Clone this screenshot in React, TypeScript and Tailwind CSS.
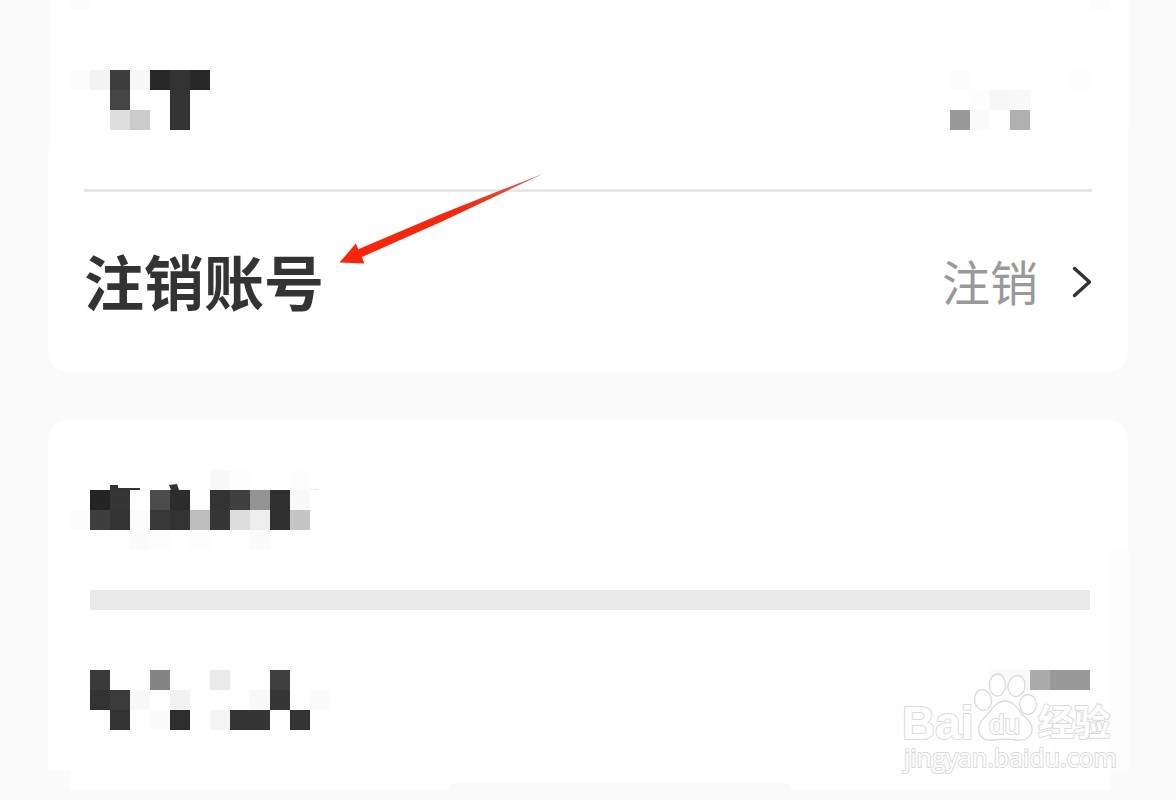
import React from "react";

type Cell = [col: number, row: number, fill: string, span?: number];

const CELL = 20;

function Mosaic({ cols, rows, cells, children }: { cols: number; rows: number; cells: Cell[]; children?: React.ReactNode }) {
  return (
    <svg width={cols * CELL} height={rows * CELL} aria-hidden="true" className="shrink-0">
      {cells.map(([c, r, fill, span = 1]) => (
        <rect key={`${c}-${r}`} x={c * CELL} y={r * CELL} width={span * CELL} height={CELL} fill={fill} />
      ))}
      {children}
    </svg>
  );
}

const nameCells: Cell[] = [
  [0, 0, "#fcfcfc"], [1, 0, "#f3f3f3"], [2, 0, "#3d3d3d"], [3, 0, "#f7f7f7"],
  [4, 0, "#292929"], [5, 0, "#333333"], [6, 0, "#292929"],
  [2, 1, "#454545"], [5, 1, "#333333"],
  [2, 2, "#dfdfdf"], [3, 2, "#cbcbcb"], [5, 2, "#333333"],
];

const nameValueCells: Cell[] = [
  [0, 0, "#fcfcfc"], [6, 0, "#fdfdfd"],
  [1, 1, "#fdfdfd"], [2, 1, "#f7f7f7"], [3, 1, "#f8f8f8"],
  [0, 2, "#999999"], [1, 2, "#fafafa"], [3, 2, "#b0b0b0"],
];

const titleCells: Cell[] = [
  [7, 0, "#f9f9f9"], [8, 0, "#fdfdfd"], [11, 0, "#fdfdfd"],
  [1, 1, "#242424"], [2, 1, "#353535"], [4, 1, "#4c4c4c"], [5, 1, "#2c2c2c"],
  [7, 1, "#333333"], [8, 1, "#404040"], [9, 1, "#939393"], [10, 1, "#303030"], [11, 1, "#f9f9f9"],
  [0, 2, "#fcfcfc"], [1, 2, "#3e3e3e"], [2, 2, "#333333"], [3, 2, "#fcfcfc"], [4, 2, "#393939"],
  [5, 2, "#333333"], [6, 2, "#bebebe"], [7, 2, "#363636"], [8, 2, "#dcdcdc"], [9, 2, "#eeeeee"],
  [10, 2, "#303030"], [11, 2, "#c5c5c5"],
  [3, 3, "#fbfbfb"], [4, 3, "#fdfdfd"], [6, 3, "#fdfdfd"], [9, 3, "#fbfbfb"],
];

const detailCells: Cell[] = [
  [0, 0, "#3a3a3a"], [3, 0, "#848484"], [6, 0, "#ebebeb"], [9, 0, "#3f3f3f"],
  [0, 1, "#333333"], [1, 1, "#3b3b3b"], [2, 1, "#f9f9f9"], [4, 1, "#f2f2f2"], [8, 1, "#f8f8f8"],
  [9, 1, "#363636"], [11, 1, "#fbfbfb"],
  [1, 2, "#333333"], [3, 2, "#fbfbfb"], [4, 2, "#2d2d2d"], [6, 2, "#f5f5f5"], [7, 2, "#353535", 2],
  [10, 2, "#333333"],
];

const detailValueCells: Cell[] = [[0, 0, "#f9f9f9", 2], [2, 0, "#ababab"], [3, 0, "#999999", 2]];

function Arrow() {
  return (
    <svg width="210" height="96" viewBox="336 170 210 96" aria-hidden="true" className="pointer-events-none absolute left-72 top-[170px]">
      <defs>
        <linearGradient id="arrow-fill" gradientUnits="userSpaceOnUse" x1="340" y1="263" x2="544" y2="173">
          <stop offset="0" stopColor="#fb2408" />
          <stop offset="0.6" stopColor="#ee2a10" />
          <stop offset="1" stopColor="#d06a60" />
        </linearGradient>
      </defs>
      <path d="M339.5 262.6 355.8 243.6 358.3 249.2 440 214.6 500 190.6 543.6 173.4 502 193.2 442 221.4 362 257 364.2 263.6Z" fill="url(#arrow-fill)" />
    </svg>
  );
}

function Watermark() {
  return (
    <svg width="216" height="106" viewBox="900 670 216 106" role="img" aria-label="Baidu" className="pointer-events-none absolute bottom-3.5 right-3">
      <g fill="#ffffff" stroke="#dadada" strokeWidth="1.3">
        <ellipse cx="983" cy="700" rx="8.5" ry="10.5" transform="rotate(-10 983 700)" />
        <ellipse cx="997.5" cy="685" rx="8" ry="11" />
        <ellipse cx="1016.5" cy="686" rx="8.5" ry="10.5" transform="rotate(10 1016.5 686)" />
        <ellipse cx="1028" cy="704.5" rx="8.3" ry="10" />
        <path d="M1005 701C998 701 993 707 988 714C983 719 977 724 979 732C981 739 987 741 994 740C1001 739 1009 739 1016 740C1024 741 1031 738 1032 731C1033 723 1027 719 1021 713C1016 706 1012 701 1005 701Z" />
      </g>
      <g fill="#ffffff" stroke="#dadada" strokeWidth="2" strokeLinejoin="round" paintOrder="stroke">
        <text x="902" y="739" className="font-['Liberation_Sans',sans-serif] text-[46px] font-bold">Bai</text>
        <text x="989" y="734" className="font-['Liberation_Sans',sans-serif] text-[28px]">du</text>
        <text x="1038" y="736" className="font-['Noto_Sans_CJK_SC',sans-serif] text-[36px] font-bold">经验</text>
        <text x="904" y="767" className="font-['Open_Sans',sans-serif] text-[25px]">jingyan.baidu.com</text>
      </g>
    </svg>
  );
}

export default function App() {
  return (
    <main className="flex min-h-screen flex-col gap-12 overflow-x-hidden bg-[#fafafa] px-12 pb-2.5 font-['Noto_Sans_CJK_SC',sans-serif]">
      <section className="relative rounded-b-[20px] bg-white">
        <div className="flex items-start justify-between pb-[59px] pl-[22px] pr-[38px] pt-[70px]">
          <Mosaic cols={7} rows={3} cells={nameCells} />
          <Mosaic cols={7} rows={3} cells={nameValueCells} />
        </div>
        <hr className="mx-9 border-0 border-t-[3px] border-[#e8e8e8]" />
        <button type="button" className="flex h-[180px] w-full items-center justify-between px-9 pb-1 text-left">
          <span className="text-[60px] font-bold leading-[60px] text-[#333333]">注销账号</span>
          <span className="flex items-center gap-8 text-[48px] leading-[60px] text-[#999999]">
            注销
            <svg width="22" height="36" viewBox="0 0 22 36" fill="none" stroke="#333333" strokeWidth="3.4" strokeLinecap="round" strokeLinejoin="round" aria-hidden="true">
              <path d="M4.5 6.5 19.5 20 4.5 33.5" />
            </svg>
          </span>
        </button>
        <Arrow />
        <span className="absolute left-[22px] top-0 h-2.5 w-5 bg-[#fcfcfc]" />
        <span className="absolute right-[18px] top-0 h-2.5 w-5 bg-[#fcfcfc]" />
        <span className="absolute left-0 top-0 h-[150px] w-0.5 bg-[#fbfbfb]" />
        <span className="absolute -right-0.5 top-0 h-[130px] w-0.5 bg-[#fdfdfd]" />
      </section>

      <section className="relative rounded-t-[20px] bg-white">
        <div className="pb-10 pl-[22px] pt-[50px]">
          <Mosaic cols={13} rows={4} cells={titleCells}>
            <path d="M40 15h8v3h22v2H40ZM99 15l8-1 2 6h-8Z" fill="#333333" />
            <path d="M240 19h8v1h-8Z" fill="#e8e8e8" />
          </Mosaic>
        </div>
        <hr className="ml-[42px] mr-[38px] border-0 border-t-[20px] border-[#e9e9e9]" />
        <div className="flex items-start justify-between pb-[60px] pl-[42px] pr-[38px] pt-[60px]">
          <Mosaic cols={12} rows={3} cells={detailCells} />
          <Mosaic cols={5} rows={1} cells={detailValueCells} />
        </div>
        <span className="absolute -right-0.5 bottom-5 top-[130px] w-5 bg-[#fdfdfd]" />
        <span className="absolute bottom-0 left-0 h-5 w-[22px] bg-[#fbfbfb]" />
        <span className="absolute bottom-0 right-0 h-5 w-[18px] bg-[#fbfbfb]" />
        <span className="absolute bottom-0 left-1/2 h-[7px] w-[340px] -translate-x-[138px] rounded-t bg-[#fafafa]" />
        <Watermark />
      </section>
    </main>
  );
}
